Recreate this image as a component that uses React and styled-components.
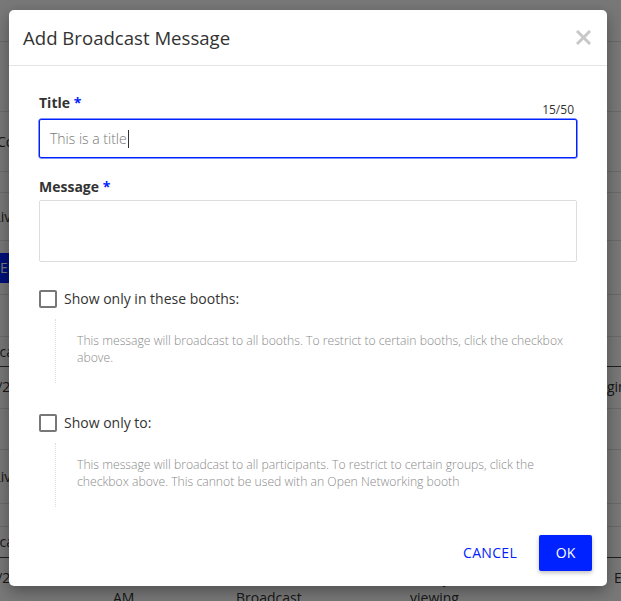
import styled, { createGlobalStyle } from "styled-components";

const GlobalStyle = createGlobalStyle`
  html, body {
    margin: 0;
    padding: 0;
  }
  body {
    font-family: "Open Sans", "Noto Sans", sans-serif;
    color: #333;
  }
`;

const Page = styled.div`
  position: relative;
  width: 621px;
  height: 601px;
  overflow: hidden;
  background: #fff;
`;

const BgTable = styled.div`
  display: flex;
  flex-direction: column;
  font-size: 14px;
  line-height: 20px;
  color: #333;
`;

const BgRow = styled.div`
  display: flex;
  align-items: ${(p) => (p.top ? "flex-start" : "center")};
  padding-top: ${(p) => (p.top ? 10 : 0)}px;
  height: ${(p) => p.h}px;
  border-bottom: 1px solid ${(p) => (p.strong ? "#444" : "#e2e2e2")};
  box-sizing: border-box;
`;

const BgCell = styled.div`
  width: ${(p) => p.w}px;
  padding-left: ${(p) => p.indent || 0}px;
  box-sizing: border-box;
  flex-shrink: 0;
  white-space: pre-line;
  &:first-child {
    margin-left: -40px;
  }
`;

const BgButton = styled.div`
  margin-left: -10px;
  background: #0022ff;
  color: #fff;
  padding: 5px 10px;
  font-size: 14px;
`;

const Overlay = styled.div`
  position: absolute;
  inset: 0;
  background: rgba(0, 0, 0, 0.53);
`;

const Modal = styled.div`
  position: absolute;
  left: 9px;
  top: 10px;
  width: 598px;
  height: 576px;
  background: #fff;
  border-radius: 5px;
  box-shadow: 0 5px 15px rgba(0, 0, 0, 0.35);
  display: flex;
  flex-direction: column;
`;

const Header = styled.div`
  display: flex;
  align-items: center;
  justify-content: space-between;
  height: 55px;
  padding: 0 16px 0 14px;
  border-bottom: 1px solid #e5e5e5;
`;

const HeaderTitle = styled.h2`
  margin: 0;
  font-size: 18.6px;
  font-weight: 400;
  color: #333;
`;

const Close = styled.button`
  border: none;
  background: none;
  padding: 0;
  cursor: pointer;
  display: flex;
`;

const Body = styled.div`
  padding: 27px 30px 0;
  display: flex;
  flex-direction: column;
`;

const LabelRow = styled.div`
  display: flex;
  justify-content: space-between;
  align-items: flex-end;
  margin-bottom: ${(p) => p.gap}px;
`;

const Label = styled.label`
  font-size: 14px;
  font-weight: 700;
  line-height: 20px;
  color: #333;
  margin-bottom: ${(p) => (p.withCounter ? 5 : 0)}px;
`;

const Req = styled.span`
  color: #0022ff;
`;

const Counter = styled.span`
  font-size: 12px;
  line-height: 16px;
  color: #333;
  margin-right: 3px;
`;

const TextInput = styled.div`
  height: 39px;
  box-sizing: border-box;
  border: 1px solid ${(p) => (p.focused ? "#0022ff" : "#dcdcdc")};
  box-shadow: ${(p) => (p.focused ? "0 0 0 0.5px #0022ff" : "none")};
  border-radius: 2px;
  padding: 0 10px;
  display: flex;
  align-items: center;
  font-size: 14px;
  font-weight: 300;
  color: #777;
  margin-bottom: 19px;
`;

const Caret = styled.span`
  display: inline-block;
  width: 1px;
  height: 18px;
  background: #333;
  margin-left: 1px;
`;

const TextArea = styled.div`
  height: 62px;
  box-sizing: border-box;
  border: 1px solid #dcdcdc;
  border-radius: 2px;
  margin-bottom: 27px;
`;

const CheckRow = styled.label`
  display: flex;
  align-items: center;
  gap: 7px;
  font-size: 14px;
  color: #333;
`;

const Box = styled.span`
  width: 18px;
  height: 18px;
  box-sizing: border-box;
  border: 2px solid #777;
  border-radius: 2px;
`;

const Help = styled.div`
  margin: 11px 0 ${(p) => p.after}px 16px;
  border-left: 1px dotted #ddd;
  height: 64px;
  box-sizing: border-box;
  padding: 13px 0 0 21px;
  font-size: 12.2px;
  font-weight: 300;
  line-height: 17px;
  color: #8a8a8a;
`;

const Footer = styled.div`
  margin-top: auto;
  display: flex;
  justify-content: flex-end;
  align-items: center;
  gap: 6px;
  padding: 0 15px 14px;
`;

const TextButton = styled.button`
  border: none;
  background: none;
  color: #0022ff;
  font-family: inherit;
  font-size: 14px;
  font-weight: 500;
  letter-spacing: 0.3px;
  padding: 10px 16px;
  cursor: pointer;
`;

const PrimaryButton = styled.button`
  border: none;
  background: #0022ff;
  color: #fff;
  font-family: inherit;
  font-size: 14px;
  font-weight: 500;
  width: 53px;
  height: 36px;
  border-radius: 2px;
  box-shadow: 0 2px 4px rgba(0, 0, 0, 0.25);
  cursor: pointer;
`;

const widths = [153, 123, 174, 180, 200];

const bgRows = [
  { h: 42, cells: [] },
  { h: 70, cells: [] },
  { h: 60, cells: ["Meet Connect"] },
  { h: 21, cells: [] },
  { h: 48, cells: ["Now Live"] },
  { h: 54, button: true },
  { h: 42, cells: [] },
  { h: 30, cells: ["Broadcast"], strong: true },
  { h: 42, cells: ["06/15/2021", "", "", "", "Begin"], top: true },
  { h: 41, cells: [] },
  { h: 54, cells: ["Now Live"] },
  { h: 23, cells: [] },
  { h: 31, cells: ["Broadcast"], strong: true },
  {
    h: 60,
    cells: ["06/15/2021\nAM", "10:00\nAM", "Text\nBroadcast", "Ready for\nviewing", "End"],
    indent: [0, 0, 0, 0, 24],
    top: true,
  },
];

function Background() {
  return (
    <BgTable>
      {bgRows.map((row, i) => (
        <BgRow key={i} h={row.h} strong={row.strong} top={row.top}>
          {row.button ? (
            <BgButton>EDIT</BgButton>
          ) : (
            row.cells.map((c, j) => (
              <BgCell key={j} w={widths[j]} indent={row.indent && row.indent[j]}>
                {c}
              </BgCell>
            ))
          )}
        </BgRow>
      ))}
    </BgTable>
  );
}

export default function App() {
  return (
    <Page>
      <GlobalStyle />
      <Background />
      <Overlay />
      <Modal>
        <Header>
          <HeaderTitle>Add Broadcast Message</HeaderTitle>
          <Close aria-label="close">
            <svg width="15" height="15" viewBox="0 0 15 15">
              <path
                d="M2 2 L13 13 M13 2 L2 13"
                stroke="#c8c8c8"
                strokeWidth="3"
                strokeLinecap="square"
              />
            </svg>
          </Close>
        </Header>
        <Body>
          <LabelRow gap={1}>
            <Label withCounter>
              Title <Req>*</Req>
            </Label>
            <Counter>15/50</Counter>
          </LabelRow>
          <TextInput focused>
            This is a title
            <Caret />
          </TextInput>
          <LabelRow gap={3}>
            <Label>
              Message <Req>*</Req>
            </Label>
          </LabelRow>
          <TextArea />
          <CheckRow>
            <Box />
            Show only in these booths:
          </CheckRow>
          <Help after={30}>
            This message will broadcast to all booths. To restrict to certain
            booths, click the checkbox above.
          </Help>
          <CheckRow>
            <Box />
            Show only to:
          </CheckRow>
          <Help after={0}>
            This message will broadcast to all participants. To restrict to
            certain groups, click the checkbox above. This cannot be used with
            an Open Networking booth
          </Help>
        </Body>
        <Footer>
          <TextButton>CANCEL</TextButton>
          <PrimaryButton>OK</PrimaryButton>
        </Footer>
      </Modal>
    </Page>
  );
}
